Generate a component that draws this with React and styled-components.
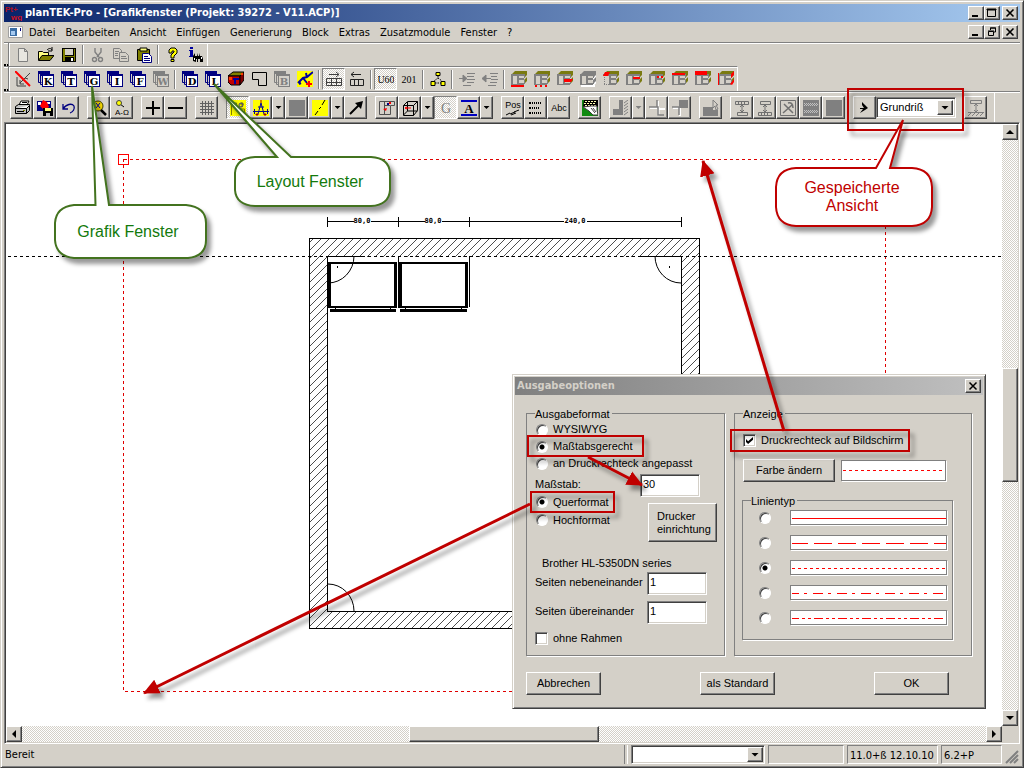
import { useState } from 'react';
import styled, { createGlobalStyle, css } from 'styled-components';

const FACE = '#d4d0c8';
const UI_FONT = "'DejaVu Sans Condensed', 'DejaVu Sans', sans-serif";
const DIALOG_FONT = "'Liberation Sans', Arial, sans-serif";

/* ---------- icons ---------- */

const WinIcon = ({ letter, off }) => {
  const c = off ? '#808080' : '#000080';
  return (
    <g>
      <path d="M0 0h12v3h-12z" fill={c} />
      <path d="M0.5 0.5v11h3M2.5 2.5v11h2M11.5 1v3" stroke={c} fill="none" />
      <rect x="4.5" y="4.5" width="11" height="11" fill={off ? FACE : '#fff'} stroke={c} />
      <path d="M3 3h13v2h-13z" fill={c} />
      <text x="10" y="14" textAnchor="middle" fontSize="10" fontWeight="bold" fontFamily="DejaVu Serif, serif" fill={off ? c : '#000'}>
        {letter}
      </text>
    </g>
  );
};

const Cabinet = ({ off, children }) => (
  <g>
    {off && <path d="M1 15h14M15 2v4l-3 3M15 8v4l-3 3" fill="none" stroke="#fff" strokeWidth="2" />}
    <path d="M4 0h12l-3 3H1zM13 3l3-3v4l-3 3zM13 9l3-3v4l-3 3z" fill={off ? '#808080' : '#7a7a10'} />
    <path d="M0 3h13v2H0zM0 3h2v11H0zM6 3h2v11H6zM0 13h7v1H0zM8 7h5v2H8zM8 12h5v2H8z" fill="#808080" />
    <path d="M13 3h1v4h-1zM13 9h1v4h-1z" fill="#808080" />
    {children}
  </g>
);

const icons = {
  neu: <path d="M3.5 1.5h6l3 3v10h-9zM9.5 1.5v3h3" fill="#e8e6e0" stroke="#808080" />,
  oeffnen: (
    <g>
      <path d="M0.5 13V4.5h4l1 1h5V8" fill="#ffff80" stroke="#000" />
      <path d="M0.5 13.5L4 8.5h12l-4 5z" fill="#808000" stroke="#000" />
      <path d="M9 3c2-2 4-2 5 0M14 0v4h-4" fill="none" stroke="#000" />
    </g>
  ),
  speichern: (
    <g>
      <path d="M1 1h14v14H1z" />
      <path d="M2 2h2v7h9V2h1v12H2z" fill="#808000" />
      <path d="M4 2h8v6H4z" fill={FACE} />
      <path d="M4 10h9v4H4z" />
      <path d="M10 11h2v3h-2z" fill="#fff" />
    </g>
  ),
  schneiden: (
    <g fill="none" stroke="#808080" strokeWidth="1.4">
      <path d="M5 1v4l4 5M11 1v4l-4 5" />
      <circle cx="4.5" cy="12.5" r="2" />
      <circle cx="10.5" cy="12.5" r="2" />
    </g>
  ),
  kopieren: (
    <g fill={FACE} stroke="#808080">
      <path d="M0.5 1.5h6l2 2v8h-8z" />
      <path d="M6.5 5.5h6l3 3v6h-9zM8 9.5h5M8 11.5h6M2 4.5h4M2 6.5h3M2 8.5h3" />
    </g>
  ),
  einfuegen: (
    <g>
      <path d="M1.5 2.5h12v11h-12z" fill="#808000" stroke="#000" />
      <path d="M4 1h7v3H4z" fill="#ffff80" stroke="#000" />
      <path d="M6.5 6.5h6l3 3v6h-9z" fill="#fff" stroke="#000080" />
      <path d="M8 9.5h4M8 11.5h6M8 13.5h6" stroke="#000080" />
    </g>
  ),
  hilfe: (
    <g>
      <path d="M4 5V3l2-2h4l2 2v3l-3 3v2H6V8l3-3V4H7v2H4z" fill="#ffff00" stroke="#000" />
      <path d="M6 12.5h3v2H6z" fill="#ffff00" stroke="#000" />
    </g>
  ),
  suchen: (
    <g>
      <path d="M2 0h3v2H2zM1 3h4v6h1v1H1V9h1V4H1z" fill="#0000a0" />
      <path d="M5 14V9l2-3v3h2V6l1 3h1l1-3v3h2l1 3v3h-3v-3h-2v3H9v-3H8v3z" />
      <path d="M6 11h1v2H6zM13 10h1v2h-1z" fill="#fff" />
    </g>
  ),
  keinStift: (
    <g>
      <path d="M2 6v9h9M5 12l7-7M5 9v4h4M12 5l3-3M10 7l3 1" fill="none" stroke="#404040" />
      <path d="M0 0l15 15" stroke="#ff0000" strokeWidth="2" />
    </g>
  ),
  box: (
    <g>
      <path d="M0 5l5-4h11l-3 4z" fill="#808000" stroke="#000" />
      <path d="M0 5h12v9H3l-3-3z" fill="#c00000" stroke="#000" />
      <path d="M12 5l4-4v8l-4 5z" fill="#800000" stroke="#000" />
      <path d="M5 7h6v2H8v4H6V9H5z" fill="#0000a0" />
      <path d="M1 6h3v3H1zM13 2h2v2h-2z" fill="#ff4000" />
    </g>
  ),
  form: <path d="M1.5 1.5h14v13h-8v-6h-6z" fill="none" stroke="#000" />,
  gelb: (
    <g>
      <path d="M0 0h16v16H0z" fill="#ffff00" />
      <path d="M1 12l5-5 4-1 6-5M2 13l2-1M6 7l4 5M9 2l1 5" fill="none" stroke="#0000a0" strokeWidth="2" />
      <path d="M12 10v6M9 13h6" stroke="#ff0000" strokeWidth="2" />
    </g>
  ),
  massRechts: <path d="M3 3.5h10M10 1l3 2.5-3 2.5M0.5 7.5h15v7h-15zM5.5 8v6M10.5 8v6M0 11.5h16" fill="none" stroke="#404040" />,
  massLinks: <path d="M2 3.5h10M5 1l-3 2.5 3 2.5M1.5 8.5h13v6h-13zM5.5 8v6M9.5 8v6" fill="none" stroke="#202020" />,
  u60: <text x="8" y="12" textAnchor="middle" fontSize="10" fontFamily="Liberation Serif, serif">U60</text>,
  z201: <text x="8" y="12" textAnchor="middle" fontSize="10" fontFamily="Liberation Serif, serif">201</text>,
  baum: (
    <g stroke="#000" fill="#ffff00">
      <path d="M8 5v2l-4 3M8 7l4 3M5 12h6" fill="none" strokeDasharray="1.5 1" />
      <path d="M6 1.5h4v3H6zM1 10.5h4v4H1zM11 10.5h4v4h-4z" />
    </g>
  ),
  einruecken: (
    <g stroke="#808080" fill="none">
      <path d="M8 2.5h8M8 5.5h7M0 7.5h7M8 8.5h8M8 11.5h7M4 14.5h8" />
      <path d="M4 4l4 3.5-4 3.5z" fill="#808080" />
    </g>
  ),
  ausruecken: (
    <g stroke="#808080" fill="none">
      <path d="M8 2.5h8M9 5.5h6M3 7.5h6M9 8.5h7M8 11.5h7M6 14.5h8" />
      <path d="M4 4L0 7.5 4 11z" fill="#808080" />
    </g>
  ),
  k1: <Cabinet><path d="M0 14h13v2H0z" fill="#f00" /></Cabinet>,
  k2: <Cabinet><path d="M1 14h2v2H1zM6 14h2v2H6zM11 14h2v2h-2z" fill="#f00" /></Cabinet>,
  k3: <Cabinet><path d="M7 8h9l-2 3H7z" fill="#f00" /></Cabinet>,
  k4: <Cabinet off />,
  k5: (
    <Cabinet>
      <path d="M0 5h6v9H0z" fill={FACE} />
      <path d="M2 1h5l-2 4H0z" fill="#f00" />
      <path d="M1 13.5h12M1.5 6v8" stroke="#808080" strokeDasharray="1 1" />
    </Cabinet>
  ),
  k6: <Cabinet><path d="M7 6h7v2H7z" fill="#f00" /></Cabinet>,
  k7: <Cabinet><path d="M8 5h2v2H8zM12 5h2v2h-2z" fill="#f00" /></Cabinet>,
  k8: <Cabinet><path d="M0 2h13v2H0z" fill="#f00" /></Cabinet>,
  k9: <Cabinet><path d="M0 0h12v4H0z" fill="#f00" /></Cabinet>,
  k10: <Cabinet><path d="M0 2h1v12H0zM13 3l3-3v4l-3 3zM12 13l4-5v3l-2 3z" fill="#f00" /></Cabinet>,
  drucken: (
    <g stroke="#000" fill="#fff">
      <path d="M5 5l2-4h8l-2 4" />
      <path d="M1.5 6.5l3-2h11v6l-3 3h-11z" fill="#c0c0c0" />
      <path d="M1.5 8.5h11l3-3M12.5 8.5v5M3 11.5h7M8 2.5h5M7 4.5h5" />
      <path d="M9 10.5h2" stroke="#808000" />
    </g>
  ),
  bildSpeichern: (
    <g>
      <path d="M0 1h14v10H0z" fill="#000080" />
      <path d="M1 2h3v3H1zM10 2h3v2h-3z" fill="#fff" />
      <path d="M6 0l4 2 2 5-5 3-4-4z" fill="#f00" />
      <path d="M6 8h10v8H6z" />
      <path d="M8 8h6v3H8z" fill="#ffff80" />
      <path d="M9 13h4v3H9z" fill="#c0c0c0" />
    </g>
  ),
  zurueck: <path d="M3 4v5h5M3 9c3-5 9-6 11-3 1 3-1 6-4 7" fill="none" stroke="#000080" strokeWidth="1.3" />,
  lupe: (
    <g>
      <circle cx="7" cy="6" r="5" fill="#ffe000" stroke="#404000" />
      <path d="M5 3l4 5M5 8l4-5" stroke="#0000c0" />
      <path d="M10 10l5 5" stroke="#000" strokeWidth="2.5" />
    </g>
  ),
  aOmega: (
    <g>
      <path d="M6 4l4 3" stroke="#000" />
      <circle cx="5" cy="3" r="2.5" fill="#ffff00" stroke="#404040" />
      <text x="8" y="15" textAnchor="middle" fontSize="8" fontFamily="Liberation Sans, sans-serif">A-Ω</text>
    </g>
  ),
  plus: <path d="M1 8h14M8 1v14" stroke="#000" strokeWidth="2" />,
  minus: <path d="M0 8h15" stroke="#000" strokeWidth="2" />,
  raster: (
    <path
      d="M1 3.5h14M1 6.5h14M1 9.5h14M1 12.5h14M3.5 1v14M6.5 1v14M9.5 1v14M12.5 1v14"
      stroke="#606060"
      shapeRendering="crispEdges"
    />
  ),
  bemassung: (
    <g>
      <path d="M0 0h16v16H0z" fill="#ffff00" />
      <path d="M1.5 15V3h5v6h8v6M12 2v5M10 4h4" fill="none" stroke="#808000" />
      <circle cx="11" cy="5" r="2" fill="none" stroke="#404080" />
    </g>
  ),
  bogen: (
    <g>
      <path d="M0 0h16v16H0z" fill="#ffff00" />
      <path d="M0 11.5h16M1.5 9v5M14.5 9v5M5 14l3-11 3 11M5 7h6" fill="none" stroke="#0000a0" />
      <path d="M3 14h2v1H3zM11 14h2v1h-2zM8 0v3" fill="#a00000" stroke="#a00000" />
    </g>
  ),
  flaeche: <path d="M0 0h16v16H0z" fill="#808080" />,
  linie: (
    <g>
      <path d="M0 0h16v16H0z" fill="#ffff00" />
      <path d="M3 15l3-4M7 9l2-2M10 5l3-5" stroke="#000" />
    </g>
  ),
  pfeil: (
    <g>
      <path d="M2 14L12 4" stroke="#000" strokeWidth="2" />
      <path d="M7 3l8-2-2 8z" />
    </g>
  ),
  planung: (
    <g>
      <path d="M0.5 1.5h15v4h-4v9h-11zM5.5 2v12M11 5.5H6" fill="none" stroke="#505050" />
      <path d="M4 9l4-1-1 3zM10 2h2v2h-2z" fill="#f00" />
      <path d="M8 3h2v2H8z" fill="#000080" />
    </g>
  ),
  wuerfel: (
    <g>
      <path d="M1.5 5.5h10v10h-10zM1.5 5.5l4-4h10v9l-4 5M11.5 5.5l4-4M5.5 2v9h10M1.5 15l4-4" fill="none" stroke="#000" />
      <path d="M3 8h6M3 8l2-1M3 8l2 1" stroke="#f00" />
    </g>
  ),
  gBuch: <text x="8" y="13" textAnchor="middle" fontSize="14" fontFamily="Liberation Serif, serif" fill="#808080">G</text>,
  schrift: (
    <g>
      <path d="M0 0h16v2H0zM0 14h16v2H0z" fill="#0000c0" />
      <text x="8" y="13" textAnchor="middle" fontSize="13" fontWeight="bold" fontFamily="Liberation Serif, serif">A</text>
    </g>
  ),
  pos: (
    <g>
      <text x="8" y="8" textAnchor="middle" fontSize="9" fontFamily="Liberation Sans, sans-serif">Pos</text>
      <path d="M1 15l4-2M5 14l5-2M9 12l5-2M6 15l5-2" stroke="#000" />
    </g>
  ),
  liste: (
    <g stroke="#000" strokeWidth="2" shapeRendering="crispEdges">
      <path d="M1 3h2M1 8h2M1 13h2" />
      <path d="M4 3h10M4 8h8M4 13h9" strokeDasharray="1 1" />
    </g>
  ),
  abc: <text x="8" y="11" textAnchor="middle" fontSize="9" fontFamily="Liberation Sans, sans-serif">Abc</text>,
  gruen: (
    <g>
      <path d="M0 0h16v16H0z" fill="#108a10" />
      <path d="M2 0h14v7H1z" />
      <path d="M3 1.5h12M2 3.5h12M3 5.5h11" stroke="#ffffb0" strokeDasharray="2 1" />
      <path d="M1 7l8-1h6v4l1 5h-5l-4-4z" fill="#fff" stroke="#404040" />
      <path d="M9 8l4 5M11 8l3 4" stroke="#404040" />
    </g>
  ),
  wand: (
    <g>
      <path d="M6 0h4v15H0V9h6z" fill="#808080" />
      <path d="M11 3l4-3M11 6l4-3M11 9l4-3M11 12l4-3M11 15l4-3" stroke="#808080" />
    </g>
  ),
  kreuz1: (
    <g fill="none" strokeWidth="2">
      <path d="M1 8h8.5v8M9 1v8h7" stroke="#fff" />
      <path d="M0 7h9v8h6M8 0v7" stroke="#808080" strokeWidth="1.5" />
    </g>
  ),
  kreuz2: (
    <g>
      <path d="M1 8h7v8" fill="none" stroke="#fff" strokeWidth="2" />
      <path d="M7 0h9v8H7z" fill="#808080" />
      <path d="M0 7h7v8" fill="none" stroke="#808080" strokeWidth="1.5" />
    </g>
  ),
  auswahl: (
    <g>
      <path d="M0 7h10v3h5v6H0z" fill="#808080" />
      <path d="M10 0l5 5h-2l2 4-2 1-1-4-2 2z" fill={FACE} stroke="#808080" />
    </g>
  ),
  hoehe1: <path d="M1.5 1.5h13v3h-13zM4.5 2v2M7.5 2v2M10.5 2v2M8 5v7M6 7l2-2 2 2M6 10l2 2 2-2M3.5 12.5h10v3h-10z" fill="none" stroke="#707070" />,
  hoehe2: <path d="M3.5 1.5h10v3h-10zM8 5v7M6 7l2-2 2 2M6 10l2 2 2-2M1.5 12.5h13v3h-13zM4.5 13v2M7.5 13v2M10.5 13v2" fill="none" stroke="#707070" />,
  hammer: (
    <g fill="none" stroke="#707070">
      <path d="M0.5 0.5h15v15h-15z" />
      <path d="M3 13l9-8M4 4l9 9M8 3c3-1 5 1 5 5" strokeWidth="1.5" />
    </g>
  ),
  muster: (
    <g>
      <path d="M0 0h16v16H0z" fill="#808080" />
      <path d="M1 3.5h14M1 5.5h14M1 10.5h14M1 12.5h14" stroke="#c0c0c0" strokeDasharray="1 1" />
      <path d="M2 4.5h14M2 11.5h14" stroke="#c0c0c0" strokeDasharray="1 1" />
    </g>
  ),
  ansicht: <path d="M5 2l3 3 3 3-3 2-5 3 3-4h-3v-1h4L5 5z" />,
  boden: (
    <g fill="none" stroke="#808080">
      <path d="M2.5 0.5h11v3h-11zM8 4v8M6 6l2-2 2 2M6 10l2 2 2-2M0 12.5h16" />
      <path d="M0 16l3-3M4 16l3-3M8 16l3-3M12 16l3-3" />
    </g>
  ),
};

['K', 'T', 'G', 'I', 'F', 'D', 'L'].forEach((l) => {
  icons['win' + l] = <WinIcon letter={l} />;
});
icons.winW = <WinIcon letter="W" off />;
icons.winB = <WinIcon letter="B" off />;

const Icon = ({ name }) => (
  <svg width="16" height="16" viewBox="0 0 16 16" aria-hidden="true">
    {icons[name]}
  </svg>
);

/* ---------- toolbar contents: '|' separator, 'v' drop-down arrow, 'w' the same greyed, '!' pressed ---------- */

const standardBar = ['neu', 'oeffnen', 'speichern', '|', 'schneiden', 'kopieren', 'einfuegen', '|', 'hilfe', 'suchen'];
const fensterBar = [
  'keinStift', 'winK', 'winT', 'winG', 'winI', 'winF', 'winW', '|',
  'winD', 'winL', 'box', 'form', 'winB', 'gelb', '|',
  '!massRechts', 'massLinks', '|', '!u60', 'z201', '|', 'baum', '|', 'einruecken', 'ausruecken', '|',
  'k1', 'k2', 'k3', 'k4', 'k5', 'k6', 'k7', 'k8', 'k9', 'k10',
];
const zeichenBar = [
  'drucken', 'bildSpeichern', 'zurueck', '|', 'lupe', 'aOmega', '|', 'plus', 'minus', '|', 'raster', '|',
  '!bemassung', 'bogen', 'v', 'flaeche', 'linie', 'v', 'pfeil', '|', 'planung', 'wuerfel', 'v', '!gBuch', 'schrift', 'v', '|',
  'pos', 'liste', 'abc', '|', 'gruen', '|', 'wand', 'w', 'kreuz1', 'kreuz2', '|', 'auswahl', '|',
  'hoehe1', 'hoehe2', 'hammer', 'muster', 'flaeche', '|', 'ansicht',
];
const menu = ['Datei', 'Bearbeiten', 'Ansicht', 'Einfügen', 'Generierung', 'Block', 'Extras', 'Zusatzmodule', 'Fenster', '?'];

const lineTypes = [
  { id: 'voll', dash: 'none', offset: 0 },
  { id: 'strich', dash: '18 6', offset: 2 },
  { id: 'punkt', dash: '3 3', offset: 0 },
  { id: 'strichpunkt', dash: '10 5 3 6', offset: 3 },
  { id: 'strichpunktpunkt', dash: '9 3 3 3 3 3', offset: 2 },
];

function ToolItems({ items, raised }) {
  return items.map((item, i) => {
    if (item === '|') return raised ? <Gap key={i} /> : <Separator key={i} />;
    if (item === 'v' || item === 'w') {
      return (
        <ToolButton key={i} $raised $narrow aria-label="mehr">
          <Arrow $size={3} $off={item === 'w'} />
        </ToolButton>
      );
    }
    const pressed = item[0] === '!';
    const name = pressed ? item.slice(1) : item;
    return (
      <ToolButton key={i} $raised={raised} $pressed={pressed} aria-label={name}>
        <Icon name={name} />
      </ToolButton>
    );
  });
}

function WindowButtons({ restore }) {
  return (
    <WindowControls>
      <SmallButton aria-label="Minimieren">
        <svg width="12" height="10"><path d="M2 7h6v2H2z" /></svg>
      </SmallButton>
      <SmallButton aria-label="Wiederherstellen">
        <svg width="12" height="10">
          {restore ? (
            <path d="M4.5 3V1h5v4H8M4 1h6M2.5 4.5h5v4h-5zM2 4h6" fill="none" stroke="#000" />
          ) : (
            <path d="M1.5 1.5h8v7h-8zM1 1h9v1H1z" fill="none" stroke="#000" />
          )}
        </svg>
      </SmallButton>
      <SmallButton $apart aria-label="Schließen">
        <svg width="12" height="10"><path d="M2.5 1.5l7 7M9.5 1.5l-7 7" stroke="#000" strokeWidth="1.6" /></svg>
      </SmallButton>
    </WindowControls>
  );
}

function ScrollBar({ vertical }) {
  return (
    <Scroll $vertical={vertical}>
      <ScrollButton aria-label="zurück"><Arrow $size={4} $dir={vertical ? 'up' : 'left'} /></ScrollButton>
      <Track />
      <Thumb />
      <Track />
      <ScrollButton aria-label="vor"><Arrow $size={4} $dir={vertical ? 'down' : 'right'} /></ScrollButton>
    </Scroll>
  );
}

function Plan() {
  return (
    <PlanSvg shapeRendering="crispEdges">
      <defs>
        <pattern id="hatch" width="8" height="8" patternUnits="userSpaceOnUse">
          <path d="M-1 9L9 -1M-1 1L1 -1M7 9L9 7" stroke="#000" strokeWidth="0.7" shapeRendering="auto" />
        </pattern>
      </defs>
      <g transform="translate(-6 -124)" fill="none" stroke="#000">
        <path d="M123.5 159.5H885.5V691.5H123.5z" stroke="#e00000" strokeDasharray="3 3" />
        <path d="M118.5 154.5h10v10h-10z" stroke="#f00" />
        <path d="M8 256.5H1001" strokeDasharray="3 3" />

        <path d="M309.5 238.5H699.5V628.5H309.5zM327.5 256.5V611.5H681.5V256.5z" fill="url(#hatch)" fillRule="evenodd" stroke="none" />
        <path d="M309 238.5H699.5V628.5H309.5V238M327.5 256V611.5H681.5V256" />
        <path d="M327 256.5h38M641 256.5h40" />

        <path d="M327.5 221.5h26M371 221.5h54M442 221.5h122M587 221.5h95" />
        <path d="M327.5 217v10M398.5 217v10M469.5 217v10M681.5 217v10" />

        <path d="M398.5 256v52M469.5 256v51" />
        <path d="M329 263h67v44h-67zM400 263h67v44h-67z" strokeWidth="2" />
        <path d="M329.5 262v46M395.5 262v46M400.5 262v46M466.5 262v46" strokeWidth="3" />
        <path d="M330 310.5h66M400 310.5h67" strokeWidth="3" />
        <path d="M335.5 308v1M390.5 308v1M405.5 308v1M461.5 308v1" />
        <g shapeRendering="auto">
          <path d="M354 256a26 27 0 0 1-26 27M655 256a26 27 0 0 0 26 27M328 584a26 27 0 0 1 26 27" />
        </g>
        <path d="M337.5 266v2M669.5 266v2" />
      </g>
      <g transform="translate(-6 -124)" fontSize="7" fontWeight="bold" fontFamily="DejaVu Sans Mono, monospace" textAnchor="middle">
        <text x="362" y="223">80,0</text>
        <text x="433" y="223">80,0</text>
        <text x="575" y="223">240,0</text>
      </g>
    </PlanSvg>
  );
}

function OutputDialog() {
  const [format, setFormat] = useState('mass');
  const [orientation, setOrientation] = useState('quer');
  const [showRect, setShowRect] = useState(true);
  const [frameless, setFrameless] = useState(false);
  const [lineType, setLineType] = useState('punkt');

  return (
    <Dialog role="dialog" aria-label="Ausgabeoptionen">
      <DialogTitle>
        Ausgabeoptionen
        <SmallButton aria-label="Schließen">
          <svg width="12" height="10"><path d="M2.5 1.5l7 7M9.5 1.5l-7 7" stroke="#000" strokeWidth="1.5" /></svg>
        </SmallButton>
      </DialogTitle>

      <Groups>
        <Group>
          <legend>Ausgabeformat</legend>
          <Choice>
            <Radio name="format" checked={format === 'wys'} onChange={() => setFormat('wys')} />WYSIWYG
          </Choice>
          <Choice>
            <Radio name="format" checked={format === 'mass'} onChange={() => setFormat('mass')} />Maßtabsgerecht
          </Choice>
          <Choice>
            <Radio name="format" checked={format === 'an'} onChange={() => setFormat('an')} />an Druckrechteck angepasst
          </Choice>
          <ScaleRow>
            <div>
              <ScaleLabel htmlFor="massstab">Maßstab:</ScaleLabel>
              <Choice $tall>
                <Radio name="lage" checked={orientation === 'quer'} onChange={() => setOrientation('quer')} />Querformat
              </Choice>
              <Choice $tall>
                <Radio name="lage" checked={orientation === 'hoch'} onChange={() => setOrientation('hoch')} />Hochformat
              </Choice>
            </div>
            <div>
              <Field id="massstab" defaultValue="30" />
              <PrinterButton>Drucker einrichtung</PrinterButton>
            </div>
          </ScaleRow>
          <PrinterName>Brother HL-5350DN series</PrinterName>
          <PageRow>
            <label htmlFor="neben">Seiten nebeneinander</label>
            <Field id="neben" defaultValue="1" />
          </PageRow>
          <PageRow>
            <label htmlFor="ueber">Seiten übereinander</label>
            <Field id="ueber" defaultValue="1" />
          </PageRow>
          <Choice $flush>
            <Check checked={frameless} onChange={() => setFrameless(!frameless)} />ohne Rahmen
          </Choice>
        </Group>

        <Group>
          <legend>Anzeige</legend>
          <RectChoice $flush>
            <Check checked={showRect} onChange={() => setShowRect(!showRect)} />Druckrechteck auf Bildschirm
          </RectChoice>
          <ColourRow>
            <Push $wide>Farbe ändern</Push>
            <Sample>
              <svg width="100%" height="19"><path d="M1 9.5h400" stroke="#f00" strokeDasharray="3 3" /></svg>
            </Sample>
          </ColourRow>
          <LineGroup>
            <legend>Linientyp</legend>
            {lineTypes.map((t) => (
              <LineRow key={t.id}>
                <Radio name="linie" aria-label={t.id} checked={lineType === t.id} onChange={() => setLineType(t.id)} />
                <Sample>
                  <svg width="100%" height="13">
                    <path d="M1 7.5h400" stroke="#f00" strokeDasharray={t.dash} strokeDashoffset={t.offset} />
                  </svg>
                </Sample>
              </LineRow>
            ))}
          </LineGroup>
        </Group>
      </Groups>

      <DialogFooter>
        <Push>Abbrechen</Push>
        <Push>als Standard</Push>
        <Push>OK</Push>
      </DialogFooter>
    </Dialog>
  );
}

function Notes() {
  return (
    <NotesSvg>
      <defs>
        <marker id="head" markerUnits="userSpaceOnUse" markerWidth="18" markerHeight="16" refX="15" refY="8" orient="auto">
          <path d="M0 0.5L16 8 0 15.5z" fill="#c00000" />
        </marker>
      </defs>
      <g className="shadow" fill="none" stroke="#c00000">
        <path d="M847 88h115v41H847z" strokeWidth="2" />
        <path d="M527 435h115v20H527zM530 491h83v20h-83zM730 429h178v21H730z" strokeWidth="2" />
        <path d="M783 430L702 160" strokeWidth="3" markerEnd="url(#head)" />
        <path d="M587 456L641 484" strokeWidth="3" markerEnd="url(#head)" />
        <path d="M529 503L143 692" strokeWidth="3" markerEnd="url(#head)" />
      </g>
      <g className="shadow" fill="#fff" strokeWidth="2">
        <path
          d="M73 204H94.5L91 85L108 204H185Q205 206 205 222V239Q205 255 187 257H73Q55 255 54 239V222Q55 206 73 204z"
          stroke="#43731f"
        />
        <path
          d="M254 156H276L213 83L290 156H370Q388 157 389 172V189Q388 204 370 205H254Q235 204 234 189V172Q235 157 254 156z"
          stroke="#43731f"
        />
        <path
          d="M795 167H875L902 119L889 167H911Q930 168 931 186V206Q930 224 911 225H795Q776 224 775 206V186Q776 168 795 167z"
          stroke="#c00000"
        />
      </g>
      <g fontSize="16" fontFamily="Liberation Sans, Arial, sans-serif" textAnchor="middle">
        <text x="127" y="236" fill="#137a0c">Grafik Fenster</text>
        <text x="309" y="186" fill="#137a0c">Layout Fenster</text>
        <text x="851" y="192" fill="#c00000">Gespeicherte</text>
        <text x="851" y="210" fill="#c00000">Ansicht</text>
      </g>
    </NotesSvg>
  );
}

function App() {
  const [view, setView] = useState('Grundriß');

  return (
    <Frame>
      <GlobalStyle />
      <TitleBar>
        <svg width="18" height="16" fontSize="8" fontWeight="bold" fontFamily="Liberation Sans, sans-serif">
          <text x="0" y="7" fill="#b01020">Pt+</text>
          <text x="6" y="15" fill="#d01020">wg</text>
        </svg>
        <h1>planTEK-Pro - [Grafikfenster (Projekt: 39272 - V11.ACP)]</h1>
        <WindowButtons />
      </TitleBar>

      <MenuBar>
        <svg width="15" height="12">
          <path d="M0.5 0.5h14v11h-14z" fill="#fff" stroke="#a0a0a0" />
          <path d="M2 2h7v8H2z" fill="#3a6ea5" />
          <path d="M3 5h4v4H3z" fill="#a6caf0" />
          <path d="M12 2h1v3h-1z" fill="#000080" />
        </svg>
        <nav>
          {menu.map((m) => (
            <MenuItem key={m}>{m}</MenuItem>
          ))}
        </nav>
        <WindowButtons restore />
      </MenuBar>

      <ToolRow>
        <Bar><Grip /><ToolItems items={standardBar} /></Bar>
      </ToolRow>
      <ToolRow $short>
        <Bar $lined><Grip /><ToolItems items={fensterBar} /></Bar>
      </ToolRow>
      <ToolRow $large>
        <Bar $padded>
          <ToolItems items={zeichenBar} raised />
          <Combo $view>
            <select aria-label="Ansicht" value={view} onChange={(e) => setView(e.target.value)}>
              <option>Grundriß</option>
            </select>
            <ComboArrow><Arrow $size={4} /></ComboArrow>
          </Combo>
          <Gap />
          <ToolItems items={['boden']} raised />
        </Bar>
      </ToolRow>

      <Workspace>
        <Canvas>
          <Plan />
          <OutputDialog />
        </Canvas>
        <ScrollBar vertical />
        <ScrollBar />
        <div />
      </Workspace>

      <StatusBar>
        <span>Bereit</span>
        <Divider />
        <Combo>
          <select aria-label="Auswahl" />
          <ComboArrow><Arrow $size={4} /></ComboArrow>
        </Combo>
        <Pane $width={76} />
        <Pane $width={91}>11.0+ß 12.10.10</Pane>
        <Pane $width={61}>6.2+P</Pane>
        <svg width="14" height="18">
          <path d="M1 17L13 5M5 17l8-8M9 17l4-4" stroke="#808080" strokeWidth="2" />
        </svg>
      </StatusBar>

      <Notes />
    </Frame>
  );
}

/* ---------- styles ---------- */

const GlobalStyle = createGlobalStyle`
  * { box-sizing: border-box; }
  body {
    margin: 0;
    background: ${FACE};
    font: 11px/13px ${UI_FONT};
    color: #000;
  }
  svg { display: block; flex: none; }
  button, input, select { font: inherit; color: inherit; border-radius: 0; }
`;

const raisedEdge = css`
  border: 1px solid;
  border-color: #fff #404040 #404040 #fff;
  box-shadow: inset -1px -1px 0 #808080;
`;

const sunkenEdge = css`
  border: 1px solid;
  border-color: #808080 #fff #fff #808080;
  box-shadow: inset 1px 1px 0 #404040, inset -1px -1px 0 ${FACE};
`;

const checker = css`
  background: repeating-conic-gradient(#fff 0 25%, ${FACE} 0 50%) 0 0 / 2px 2px;
`;

const Frame = styled.div`
  position: relative;
  display: flex;
  flex-direction: column;
  height: 100vh;
  overflow: hidden;
  padding: 3px;
  background: ${FACE};
  border: 1px solid;
  border-color: ${FACE} #404040 #404040 ${FACE};
  box-shadow: inset 1px 1px 0 #fff, inset -1px -1px 0 #808080;
`;

const TitleBar = styled.header`
  display: flex;
  align-items: center;
  height: 18px;
  padding: 0 2px 0 1px;
  background: linear-gradient(90deg, #0a246a, #a6caf0);
  color: #fff;

  h1 {
    flex: 1;
    margin: 0 0 0 2px;
    font-size: 11px;
    line-height: 18px;
    white-space: nowrap;
  }
`;

const WindowControls = styled.div`
  display: flex;
`;

const SmallButton = styled.button`
  ${raisedEdge}
  width: 16px;
  height: 14px;
  padding: 1px;
  margin-left: ${(p) => (p.$apart ? '2px' : '0')};
  background: ${FACE};
`;

const MenuBar = styled.div`
  display: flex;
  align-items: center;
  height: 20px;
  padding: 0 2px 0 4px;

  nav {
    flex: 1;
    display: flex;
    padding-left: 1px;
  }
`;

const MenuItem = styled.button`
  padding: 0 5px;
  border: 0;
  background: none;
`;

const ToolRow = styled.div`
  height: ${(p) => (p.$large ? '31px' : p.$short ? '25px' : '24px')};
  ${(p) =>
    !p.$short &&
    css`
      border-top: 1px solid #808080;
      box-shadow: inset 0 1px 0 #fff;
    `}
`;

const Bar = styled.div`
  display: inline-flex;
  align-items: center;
  height: 100%;
  vertical-align: top;
  padding: ${(p) => (p.$padded ? '1px 7px 0 6px' : '0')};
  border-right: 1px solid #fff;
  ${(p) =>
    p.$lined &&
    css`
      border-top: 1px solid #808080;
      box-shadow: inset 0 1px 0 #fff;
    `}
`;

const Grip = styled.span`
  width: 5px;
  height: 100%;
  margin-right: 2px;
  border-right: 1px solid #808080;
  border-bottom: 2px dotted #000;
  box-shadow: 1px 0 0 #fff;
`;

const Separator = styled.span`
  width: 2px;
  height: 19px;
  margin: 0 2px;
  border-left: 1px solid #808080;
  border-right: 1px solid #fff;
`;

const Gap = styled.span`
  width: 8px;
`;

const ToolButton = styled.button`
  display: flex;
  align-items: center;
  justify-content: center;
  flex: none;
  width: ${(p) => (p.$narrow ? '13px' : '23px')};
  height: ${(p) => (p.$raised ? '23px' : '22px')};
  padding: 0;
  border: 0;
  background: none;
  ${(p) => p.$raised && raisedEdge}
  ${(p) =>
    p.$pressed &&
    css`
      ${checker}
      border: 1px solid;
      border-color: #808080 #fff #fff #808080;
      box-shadow: none;
    `}
`;

const arrowShape = {
  up: 'polygon(50% 0, 100% 100%, 0 100%)',
  down: 'polygon(0 0, 100% 0, 50% 100%)',
  left: 'polygon(100% 0, 100% 100%, 0 50%)',
  right: 'polygon(0 0, 100% 50%, 0 100%)',
};

const Arrow = styled.i`
  display: block;
  width: ${(p) => (p.$dir === 'left' || p.$dir === 'right' ? p.$size : p.$size * 2)}px;
  height: ${(p) => (p.$dir === 'left' || p.$dir === 'right' ? p.$size * 2 : p.$size)}px;
  background: ${(p) => (p.$off ? '#808080' : '#000')};
  clip-path: ${(p) => arrowShape[p.$dir || 'down']};
`;

const Combo = styled.div`
  ${sunkenEdge}
  display: flex;
  width: ${(p) => (p.$view ? '80px' : '134px')};
  height: ${(p) => (p.$view ? '21px' : '19px')};
  padding: ${(p) => (p.$view ? '2px' : '1px')};
  background: #fff;

  select {
    flex: 1;
    min-width: 0;
    padding: 0 1px;
    border: 0;
    background: none;
    appearance: none;
    font: 11px/13px ${DIALOG_FONT};
  }
`;

const ComboArrow = styled.span`
  ${raisedEdge}
  display: flex;
  align-items: center;
  justify-content: center;
  width: 16px;
  background: ${FACE};
`;

const Workspace = styled.main`
  flex: 1;
  min-height: 0;
  display: grid;
  grid-template: minmax(0, 1fr) 16px / minmax(0, 1fr) 16px;
  border: 1px solid;
  border-color: #808080 #fff #fff #808080;
  box-shadow: inset 1px 1px 0 #404040;
  padding: 1px;
`;

const Canvas = styled.section`
  position: relative;
  overflow: hidden;
  background: #fff;
`;

const PlanSvg = styled.svg`
  width: 100%;
  height: 100%;
`;

const Scroll = styled.div`
  display: flex;
  flex-direction: ${(p) => (p.$vertical ? 'column' : 'row')};
`;

const ScrollButton = styled.button`
  ${raisedEdge}
  display: flex;
  align-items: center;
  justify-content: center;
  flex: 0 0 16px;
  padding: 0;
  min-height: 16px;
  background: ${FACE};
`;

const Track = styled.span`
  ${checker}
  flex: 1;
`;

const Thumb = styled.span`
  ${raisedEdge}
  flex: 0 0 19%;
  background: ${FACE};
`;

const StatusBar = styled.footer`
  display: flex;
  align-items: center;
  gap: 3px;
  height: 20px;
  padding: 1px 1px 0;

  > span:first-child {
    flex: 1;
  }
`;

const Divider = styled.i`
  width: 4px;
  height: 19px;
  border-left: 1px solid #808080;
  border-right: 1px solid #fff;
`;

const Pane = styled.span`
  width: ${(p) => p.$width}px;
  height: 19px;
  padding: 3px 2px 0;
  border: 1px solid;
  border-color: #808080 #fff #fff #808080;
  white-space: nowrap;
`;

const Dialog = styled.section`
  position: absolute;
  left: 506px;
  top: 250px;
  width: 474px;
  padding: 2px;
  background: ${FACE};
  border: 1px solid;
  border-color: ${FACE} #404040 #404040 ${FACE};
  box-shadow: inset 1px 1px 0 #fff, inset -1px -1px 0 #808080;
  font-family: ${DIALOG_FONT};
`;

const DialogTitle = styled.h2`
  display: flex;
  align-items: center;
  justify-content: space-between;
  height: 18px;
  margin: 0;
  padding: 0 2px;
  background: linear-gradient(90deg, #808080, #c0c0c0);
  color: ${FACE};
  font: bold 11px/18px ${UI_FONT};
`;

const Groups = styled.div`
  display: grid;
  grid-template-columns: 199px 238px;
  gap: 9px;
  padding: 11px 11px 0;
`;

const Group = styled.fieldset`
  min-width: 0;
  height: 250px;
  margin: 0;
  padding: 0 8px;
  border: 1px solid #808080;
  box-shadow: 1px 1px 0 #fff;

  legend {
    padding: 2px 2px 0 0;
    background: ${FACE};
  }
`;

const Choice = styled.label`
  display: flex;
  align-items: center;
  height: ${(p) => (p.$tall ? '18px' : '17px')};
  padding-left: ${(p) => (p.$flush ? '0' : '1px')};
  white-space: nowrap;
`;

const RectChoice = styled(Choice)`
  margin-top: 11px;
`;

const Radio = styled.input.attrs({ type: 'radio' })`
  appearance: none;
  flex: none;
  width: 12px;
  height: 12px;
  margin: 0 5px 0 0;
  border: 1px solid;
  border-color: #808080 #fff #fff #808080;
  border-radius: 50%;
  background: #fff;
  box-shadow: inset 1px 1px 0 #404040;

  &:checked {
    background: radial-gradient(circle, #000 2px, #fff 3px);
  }
`;

const Check = styled.input.attrs({ type: 'checkbox' })`
  ${sunkenEdge}
  appearance: none;
  flex: none;
  width: 13px;
  height: 13px;
  margin: 0 5px 0 0;
  padding: 2px;
  background: #fff;

  &:checked::before {
    content: '';
    display: block;
    width: 7px;
    height: 7px;
    background: #000;
    clip-path: polygon(0 30%, 30% 60%, 100% 0, 100% 40%, 30% 100%, 0 70%);
  }
`;

const ScaleRow = styled.div`
  display: grid;
  grid-template-columns: 105px 1fr;
  margin-top: 2px;
`;

const ScaleLabel = styled.label`
  display: block;
  height: 19px;
  line-height: 20px;
`;

const Field = styled.input`
  ${sunkenEdge}
  display: block;
  width: 60px;
  height: 23px;
  padding: 0 2px 4px;
  background: #fff;
`;

const Push = styled.button`
  ${raisedEdge}
  width: ${(p) => (p.$wide ? '92px' : '75px')};
  height: 23px;
  padding: 0;
  background: ${FACE};
`;

const PrinterButton = styled(Push)`
  width: 69px;
  height: 39px;
  margin: 6px 0 0 8px;
  padding: 0 8px;
  text-align: left;
`;

const PrinterName = styled.div`
  padding: 15px 0 2px 7px;
`;

const PageRow = styled.div`
  display: flex;
  justify-content: space-between;
  padding-right: 9px;
  margin-bottom: 6px;

  label {
    margin-top: 4px;
  }
`;

const Sample = styled.div`
  flex: 1;
  overflow: hidden;
  border: 1px solid #808080;
  box-shadow: 1px 1px 0 #fff;
  background: #fff;
`;

const ColourRow = styled.div`
  display: flex;
  gap: 6px;
  align-items: center;
  margin-top: 10px;
  padding-right: 17px;

  ${Push} {
    flex: none;
  }
`;

const LineGroup = styled(Group)`
  width: 211px;
  height: 147px;
  margin: 11px 0 0 -1px;
  padding: 2px 5px 0 8px;

  ${Radio} {
    margin: 0 19px 0 8px;
  }
`;

const LineRow = styled.div`
  display: flex;
  align-items: center;
  margin-bottom: 10px;
`;

const DialogFooter = styled.div`
  display: flex;
  justify-content: space-between;
  padding: 16px 34px 11px 11px;
`;

const NotesSvg = styled.svg`
  position: absolute;
  inset: 0;
  width: 100%;
  height: 100%;
  pointer-events: none;

  .shadow {
    filter: drop-shadow(4px 5px 2px rgba(0, 0, 0, 0.4));
  }
`;

export default App;
